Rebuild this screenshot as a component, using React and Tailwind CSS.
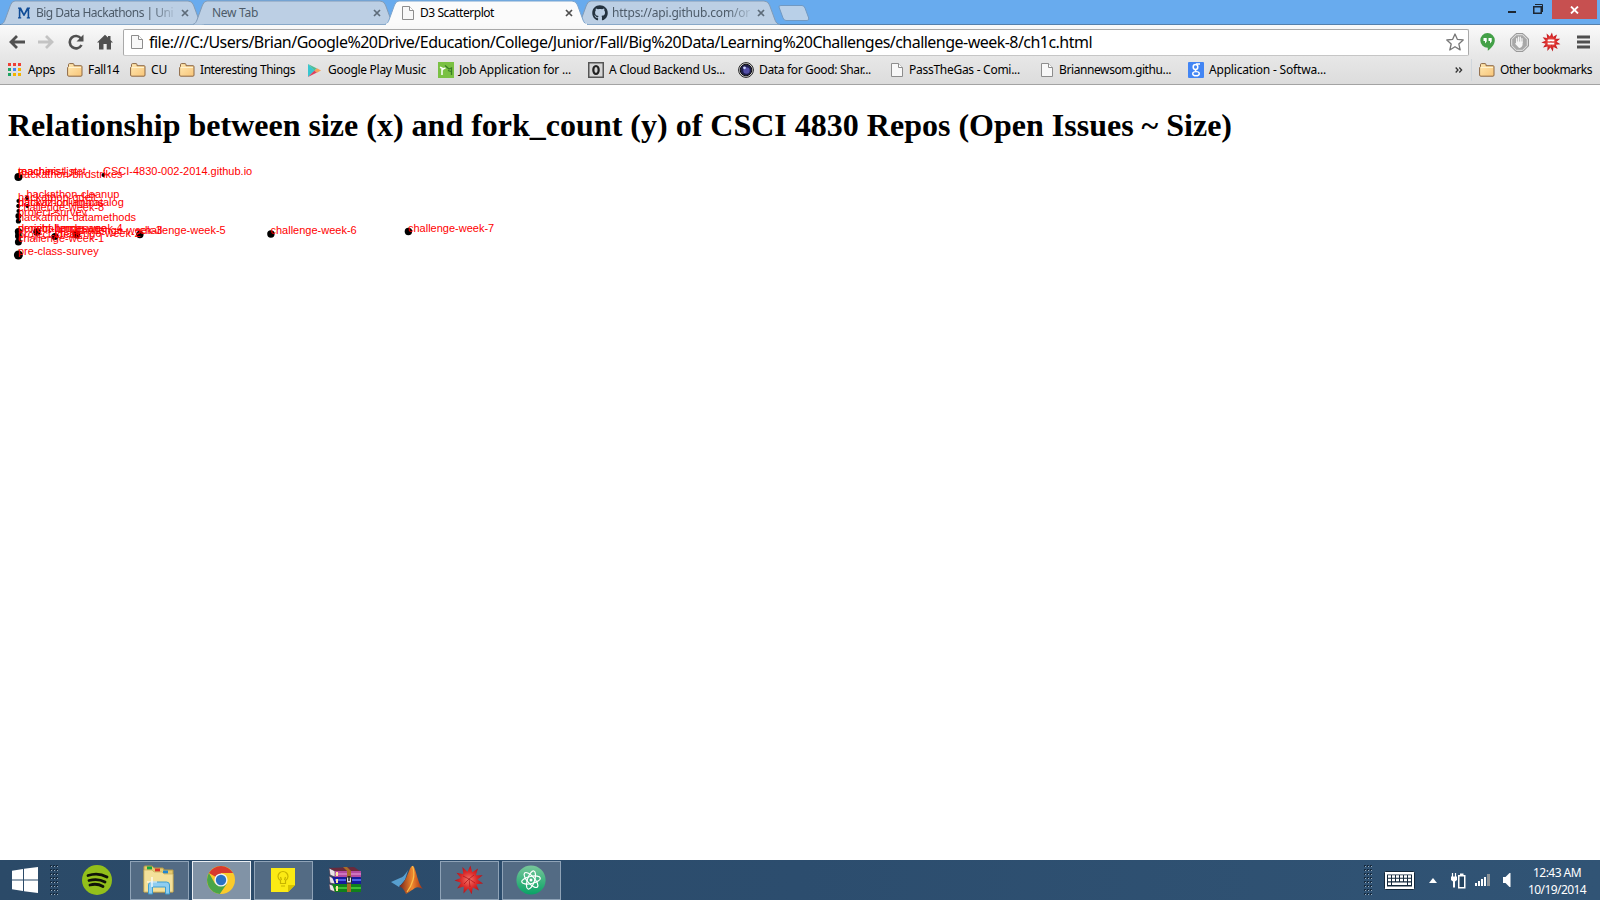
import React, { useLayoutEffect, useRef } from "react";
import { FaGithub } from "react-icons/fa";

/* Text that is spaced to a given width in pixels. */
function Fit({ w, className = "", children }) {
  const ref = useRef(null);
  useLayoutEffect(() => {
    const el = ref.current;
    el.style.letterSpacing = "0px";
    const natural = el.getBoundingClientRect().width;
    el.style.letterSpacing = (w - natural) / String(children).length + "px";
  }, [w, children]);
  return (
    <span ref={ref} className={"inline-block shrink-0 whitespace-pre " + className}>
      {children}
    </span>
  );
}

function PageIcon({ className = "" }) {
  return (
    <svg className={"shrink-0 " + className} width="12" height="14" viewBox="0 0 12 14">
      <path d="M.5.5h7l4 4v9H.5z" fill="#f8f8f8" stroke="#8d8d8d" />
      <path d="M7.5.5v4h4" fill="#fff" stroke="#8d8d8d" />
    </svg>
  );
}

function Folder() {
  return (
    <svg className="shrink-0" width="16" height="14" viewBox="0 0 16 14">
      <defs>
        <linearGradient id="fold" x1="0" y1="0" x2="1" y2="1">
          <stop offset="0" stopColor="#ffe9b4" />
          <stop offset="1" stopColor="#f8c578" />
        </linearGradient>
      </defs>
      <path d="M1.5 3.5V1.7Q1.5.6 2.5.6H6q1 0 1 1.1v1h7q1 0 1 1v8.300q0 1.200-1 1.200H1.800Q.6 13.200.6 12V4.500z" fill="url(#fold)" stroke="#8d6845" />
      <path d="M2 4.500h12" stroke="#fff3cf" />
    </svg>
  );
}

function Tab({ active, children }) {
  return (
    <div className={"relative flex h-[25px] w-48 shrink-0 items-center pl-[18px] " + (active ? "z-10" : "")}>
      <svg className="absolute top-0 left-0 overflow-visible" width="204" height="25" viewBox="0 0 204 25">
        <path
          d="M1 24.500C4 23 4 22 5 20L10.500 5Q12 1 15 1H188Q192 1 193.500 5L199 20C200 22.500 201 24 204 24.500"
          fill={active ? "#fbfbfb" : "#bccfe4"}
          stroke={active ? "#7ba4cd" : "#819bb7"}
        />
        {active && <path d="M2 24.500H203" stroke="#fafafa" strokeWidth="2" />}
      </svg>
      <div className="relative flex w-full items-center">{children}</div>
      <svg className="relative mr-[3.500px] shrink-0" width="8" height="8" viewBox="0 0 8 8">
        <path d="M1 1l6 6M7 1L1 7" stroke={active ? "#4f4f4f" : "#5d6b79"} strokeWidth="1.700" />
      </svg>
    </div>
  );
}

function Bookmark({ gap = "gap-[6px]", w, icon, label, className }) {
  return (
    <div className={"flex shrink-0 items-center " + gap + " " + className}>
      {icon}
      <Fit w={w}>{label}</Fit>
    </div>
  );
}

const appColors = ["#ee4035", "#ee4035", "#ee4035", "#1fa463", "#4386f5", "#f4b400", "#1fa463", "#f4b400", "#f4b400"];

const AppsIcon = () => (
  <svg width="14" height="14" viewBox="0 0 14 14">
    {appColors.map((c, i) => (
      <rect key={i} x={(i % 3) * 5} y={Math.floor(i / 3) * 5} width="3" height="3" fill={c} />
    ))}
  </svg>
);

const PlayIcon = () => (
  <svg width="15" height="15" viewBox="0 0 15 15">
    <path d="M1 1v13l7-6.500z" fill="#37c6d0" />
    <path d="M1 1l9 4.500-2.500 2z" fill="#53bd93" />
    <path d="M1 14l9-4.500-2.500-2z" fill="#e0405e" />
    <path d="M7.500 7.500L10 5.200l4 2.300-4 2.300z" fill="#f5a05a" />
  </svg>
);

const GreenIcon = () => (
  <svg width="16" height="16" viewBox="0 0 16 16">
    <rect width="16" height="16" fill="#7ac143" />
    <path d="M2 5.200l2 .8v7M4.500 8q.5-2 3-1.800" fill="none" stroke="#fff" strokeWidth="1.500" />
    <path d="M7 3.500l4 3.500 2.500-1V13M10 8.500l3 1" stroke="#397d26" strokeWidth="1.300" fill="none" />
  </svg>
);

const OIcon = () => (
  <svg width="16" height="16" viewBox="0 0 16 16">
    <rect x=".75" y=".75" width="14.500" height="14.500" fill="#d6d6d6" stroke="#555" strokeWidth="1.500" />
    <ellipse cx="8" cy="8" rx="2.700" ry="4" fill="none" stroke="#222" strokeWidth="2.200" />
  </svg>
);

const LensIcon = () => (
  <svg width="16" height="16" viewBox="0 0 16 16">
    <circle cx="8" cy="8" r="7.400" fill="#ddd" stroke="#222" />
    <circle cx="8" cy="8" r="5.800" fill="#20204e" stroke="#111" />
    <circle cx="8.500" cy="8.500" r="3.200" fill="#5450a8" />
    <circle cx="6.500" cy="5.800" r="1.400" fill="#cbd3ff" />
  </svg>
);

const GIcon = () => (
  <svg width="16" height="16" viewBox="0 0 16 16">
    <rect width="16" height="16" rx="1" fill="#4285f4" />
    <ellipse cx="7.500" cy="5" rx="2.300" ry="2.500" fill="none" stroke="#fff" strokeWidth="1.500" />
    <path d="M12 2H8M8 7.500q-1.500 1 .5 2" fill="none" stroke="#fff" strokeWidth="1.300" />
    <ellipse cx="8" cy="11.700" rx="3.300" ry="2.100" fill="none" stroke="#fff" strokeWidth="1.400" />
  </svg>
);

function Spikes({ size }) {
  const pts = [];
  for (let i = 0; i < 22; i++) {
    const r = i % 2 ? 8.4 : 14.5;
    const a = (i * Math.PI) / 11 - Math.PI / 2 + 0.1;
    pts.push((15 + r * Math.cos(a)).toFixed(1) + "," + (15 + r * Math.sin(a)).toFixed(1));
  }
  return (
    <svg width={size} height={size} viewBox="0 0 30 30">
      <defs>
        <radialGradient id="spk">
          <stop offset="0" stopColor="#f4766a" />
          <stop offset=".55" stopColor="#dc2c2b" />
          <stop offset="1" stopColor="#b51219" />
        </radialGradient>
      </defs>
      <polygon points={pts.join(" ")} fill="url(#spk)" />
      <path d="M9 11l6 3 5-4M15 14l1 8M10 19l5-5 6 4" fill="none" stroke="#b3171c" strokeWidth=".8" />
      {size < 25 && <path d="M10 12.500h10M10 17.500h10" stroke="#fff" strokeWidth="2.600" />}
    </svg>
  );
}

const points = [
  [18, 177, 4, "hackathon-birdstrikes", 178],
  [18, 177, 2, "machinist_net", 175],
  [18, 177, 2, "teachers-list", 175],
  [103, 175, 2, "CSCI-4830-002-2014.github.io", 175],
  [26.5, 198, 2, "hackathon-cleanup", 198],
  [18, 201, 2, "hackathon-gdelt", 201],
  [18, 206, 2, "hackathon-ag-catalog", 206],
  [18, 206, 2, "dataviz-columbus", 206],
  [27, 206, 2, "", 206],
  [18, 211, 2, "challenge-week-8", 211],
  [18, 216, 3, "project-survey", 216],
  [18, 221, 2.6, "hackathon-datamethods", 221],
  [18, 231.500, 3.600, "project-homepage", 232],
  [36.500, 232, 3.700, "challenge-week-4", 232],
  [18, 236, 3.400, "project-ideas", 238],
  [54.500, 236.500, 3.500, "challenge-week-2", 237],
  [76, 234.500, 3.900, "challenge-week-3", 234],
  [18, 232, 3, "demitri-lunch", 232],
  [139.500, 234.500, 3.700, "challenge-week-5", 234],
  [270.500, 234, 3.700, "challenge-week-6", 234],
  [408, 231.500, 3.700, "challenge-week-7", 232],
  [18, 242, 3.500, "challenge-week-1", 242],
  [18, 255, 4.500, "pre-class-survey", 255],
];

function TaskButton({ state = "open", children }) {
  const look = {
    plain: "border-transparent pr-[2px]",
    open: "border-[#8fa3b7] bg-[#536b84] pr-px",
    current: "border-[#e9eef3] bg-[#8193a6] pr-px",
  }[state];
  return (
    <div className={"flex h-[39px] w-[59px] shrink-0 items-center justify-center border " + look}>{children}</div>
  );
}

function Grip() {
  return (
    <svg width="9" height="31" viewBox="0 0 9 31">
      {Array.from({ length: 24 }, (_, i) => (
        <g key={i}>
          <rect x={(i % 3) * 3} y={Math.floor(i / 3) * 4} width="2" height="2" fill="#152a3f" />
          <rect x={(i % 3) * 3 + 1} y={Math.floor(i / 3) * 4 + 1} width="1" height="1" fill="#9dafbf" />
        </g>
      ))}
    </svg>
  );
}

function TabStrip() {
  return (
    <div className="flex h-[25px] shrink-0 border-b border-[#5480ac] bg-[#68abee] text-[12px] leading-4 text-[#4d5b69]">
      <div className="flex h-[25px] w-[772px]">
        <Tab>
          <svg className="mr-[6px] shrink-0" width="12" height="12" viewBox="0 0 12 12">
            <path d="M0 .5h3L6 6.500 9 .5h3v1.300h-.8v8.400h.8v1.300H8.800v-1.300h.8V3.500L6.400 9h-.8L2.400 3.500v6.700h.8v1.300H0v-1.300h.8V1.800H0z" fill="#0f4c97" />
          </svg>
          <div className="w-[140px] overflow-hidden [mask-image:linear-gradient(to_right,black_115px,transparent_142px)]">
            <Fit w={137}>Big Data Hackathons | Uni</Fit>
          </div>
        </Tab>
        <Tab>
          <Fit w={46} className="ml-[2px]">New Tab</Fit>
        </Tab>
        <Tab active>
          <PageIcon className="mr-[6px]" />
          <Fit w={74} className="text-black">D3 Scatterplot</Fit>
        </Tab>
        <Tab>
          <FaGithub className="-ml-[2px] mr-[4px] shrink-0 text-[#24323f]" size={16} />
          <div className="w-[140px] overflow-hidden [mask-image:linear-gradient(to_right,black_115px,transparent_142px)]">
            <Fit w={138}>https://api.github.com/or</Fit>
          </div>
        </Tab>
      </div>
      <svg className="ml-[6px] mt-[5px]" width="32" height="16" viewBox="0 0 32 16">
        <path d="M1 2Q.500.500 3 .500H24Q26 .500 27 3L30.700 13Q31.200 15.500 29 15.500H8Q6 15.500 5 13z" fill="#b9d0e8" stroke="#7199c2" />
      </svg>
      <div className="ml-auto flex h-5">
        <svg width="48" height="19" viewBox="0 0 48 19">
          <path d="M4 11h8v2H4z" fill="#1d2733" />
          <path d="M29.750 6.750h7.500v6.500h-7.500z" fill="none" stroke="#1d2733" strokeWidth="1.500" />
          <path d="M31 4.500h7.500V12" fill="none" stroke="#1d2733" />
        </svg>
        <div className="mr-[3px] flex h-[19px] w-[45px] items-center justify-center bg-[#c75050]">
          <svg width="9" height="8" viewBox="0 0 9 8">
            <path d="M1 .5l7 7M8 .5l-7 7" stroke="#fff" strokeWidth="1.800" />
          </svg>
        </div>
      </div>
    </div>
  );
}

function Toolbar() {
  return (
    <div className="flex h-[31px] items-center pt-[3px]">
      <div className="flex w-[123px] items-center gap-[13px] pl-[9px]">
        <svg width="16" height="16" viewBox="0 0 16 16">
          <path d="M8 2L2 8l6 6M2.500 8H16" fill="none" stroke="#505050" strokeWidth="2.800" />
        </svg>
        <svg width="16" height="16" viewBox="0 0 16 16">
          <path d="M8 2l6 6-6 6M13.500 8H0" fill="none" stroke="#c3c3c3" strokeWidth="2.800" />
        </svg>
        <svg className="ml-px" width="16" height="16" viewBox="0 0 16 16">
          <path d="M13 4.500A6.200 6.200 0 1 0 13.500 11" fill="none" stroke="#505050" strokeWidth="2.600" />
          <path d="M15.500.5v7h-7z" fill="#505050" />
        </svg>
        <svg width="16" height="16" viewBox="0 0 16 16">
          <path d="M8 .8l3 2.800V2h2.500v4L16 8.500h-2V15.500H9.700V10H6.500v5.500H2V8.500H0z" fill="#505050" />
        </svg>
      </div>
      <div className="flex h-[27px] w-[1346px] items-center rounded-[2px] border border-[#a9a9a9] border-b-[#c6c6c6] bg-white pl-[7px] pr-[4px]">
        <PageIcon />
        <Fit w={943} className="ml-[6px] text-[16px] leading-6 text-black">
          file:///C:/Users/Brian/Google%20Drive/Education/College/Junior/Fall/Big%20Data/Learning%20Challenges/challenge-week-8/ch1c.html
        </Fit>
        <svg className="ml-auto" width="18" height="18" viewBox="0 0 18 18">
          <path d="M9 1l2.300 5.300 5.900.6-4.400 4 1.400 6L9 13.700 3.800 17l1.400-6-4.400-4 5.900-.7z" fill="#fff" stroke="#777" strokeWidth="1.300" strokeLinejoin="round" />
        </svg>
      </div>
      <svg className="ml-[11px]" width="15" height="18" viewBox="0 0 15 18">
        <path d="M7.500 0a7.300 7.300 0 0 1 7.300 7.300c0 4.200-3.300 7.800-7 10.400v-3A7.300 7.300 0 1 1 7.500 0z" fill="#43a047" />
        <path d="M3.500 5h3.200v3.500L5 10.500V8H3.500zM8.500 5h3.200v3.500L10 10.500V8H8.500z" fill="#fff" />
      </svg>
      <svg className="ml-[15px]" width="19" height="19" viewBox="0 0 19 19">
        <path d="M6 .5h7L18.500 6v7L13 18.500H6L.5 13V6z" fill="#aaa" stroke="#999" />
        <path d="M6.500 1.700h6l4.800 4.800v6l-4.800 4.800h-6l-4.800-4.800v-6z" fill="#a8a8a8" stroke="#e6e6e6" />
        <path d="M6.700 9.500V5.500M8.500 8.500V4.200M10.300 8.500V4.200M12 9.500V5.500" stroke="#f5f5f5" strokeWidth="1.200" strokeLinecap="round" />
        <path d="M6.100 8.500h6.500V12q-1 3-3.500 3L4.800 10.500l1.300-.3z" fill="#f5f5f5" />
      </svg>
      <div className="ml-[12px]">
        <Spikes size={20} />
      </div>
      <svg className="ml-[16px]" width="13" height="14" viewBox="0 0 13 14">
        <path d="M0 2h13M0 7h13M0 12h13" stroke="#4f4f4f" strokeWidth="3" />
      </svg>
    </div>
  );
}

function Bookmarks() {
  return (
    <div className="flex h-[28px] items-center pl-2 text-[12px] leading-4 text-black">
      <Bookmark className="w-[59px]" w={27} icon={<AppsIcon />} label="Apps" />
      <Bookmark className="w-[63px]" gap="gap-[5px]" w={31} icon={<Folder />} label="Fall14" />
      <Bookmark className="w-[49px]" gap="gap-[5px]" w={16} icon={<Folder />} label="CU" />
      <Bookmark className="w-[128px]" gap="gap-[5px]" w={95} icon={<Folder />} label="Interesting Things" />
      <Bookmark className="w-[131px]" w={98} icon={<PlayIcon />} label="Google Play Music" />
      <Bookmark className="w-[150px]" gap="gap-[5px]" w={112} icon={<GreenIcon />} label="Job Application for ..." />
      <Bookmark className="w-[150px]" gap="gap-[5px]" w={116} icon={<OIcon />} label="A Cloud Backend Us..." />
      <Bookmark className="w-[153px]" gap="gap-[5px]" w={112} icon={<LensIcon />} label="Data for Good: Shar..." />
      <Bookmark className="w-[150px]" w={111} icon={<PageIcon />} label="PassTheGas - Comi..." />
      <Bookmark className="w-[147px]" w={112} icon={<PageIcon />} label="Briannewsom.githu..." />
      <Bookmark gap="gap-[5px]" w={117} className="" icon={<GIcon />} label="Application - Softwa..." />
      <div className="ml-auto flex w-[145px] items-center">
        <svg width="8" height="6" viewBox="0 0 8 6">
          <path d="M.7.5L3 3 .7 5.500M4.300.5L6.600 3 4.300 5.500" fill="none" stroke="#333" strokeWidth="1.300" />
        </svg>
        <div className="ml-2 mr-[7px] h-[22px] w-px bg-[#d0d6dc]" />
        <Bookmark className="" gap="gap-[5px]" w={92} icon={<Folder />} label="Other bookmarks" />
      </div>
    </div>
  );
}

function Taskbar() {
  return (
    <footer className="flex h-10 shrink-0 items-center bg-linear-to-r from-[#2b4a68] via-[#2c4d6e] to-[#315475] text-white">
      <svg className="ml-3" width="26" height="26" viewBox="0 0 26 26">
        <path d="M0 3.700L11 2v10.400H0zM12 1.800L26 0v12.400H12zM0 13.500h11V24L0 22.300zM12 13.500h14V26l-14-1.800z" fill="#fff" />
      </svg>
      <div className="ml-3">
        <Grip />
      </div>
      <div className="ml-[9px] flex gap-[3px]">
        <TaskButton state="plain">
          <svg width="30" height="30" viewBox="0 0 30 30">
            <circle cx="15" cy="15" r="15" fill="#93c01b" />
            <path d="M6 10.500q10-3.500 19 1.500M7 15.500q9-2.500 16 1.500M8 20q7-2 13 1.500" fill="none" stroke="#101408" strokeWidth="2.800" strokeLinecap="round" />
          </svg>
        </TaskButton>
        <TaskButton>
          <svg width="32" height="30" viewBox="0 0 32 30">
            <path d="M1 27V2q0-1 1-1h7l2 2h9l1 2h9v22z" fill="#e5c96f" stroke="#b69b45" />
            <path d="M4 1.500h5v3H4z" fill="#16a53c" />
            <path d="M12 3.500h5v3h-5z" fill="#d63527" />
            <path d="M20 5.500h5v3h-5z" fill="#2186cf" />
            <path d="M1 27V5h8l2 2h8l2 2h9v18z" fill="#f4e09a" stroke="#c7ad5a" strokeWidth=".7" />
            <path d="M5.500 29V20q0-3 3-3h15q3 0 3 3v9h-4v-7h-13v7z" fill="#8fcdf0" stroke="#3f9ed0" />
            <path d="M9 12v10M4 17h10" stroke="#fff" strokeWidth="1.200" />
          </svg>
        </TaskButton>
        <TaskButton state="current">
          <svg width="30" height="30" viewBox="0 0 30 30">
            <circle cx="15" cy="15" r="14" fill="#fbcb2a" />
            <path d="M15 15L2.900 8A14 14 0 0 1 27.100 8H15z" fill="#d83a2e" />
            <path d="M2.900 8A14 14 0 0 0 13.800 28.950L21 18.500 9 18.500z" fill="#4aa548" />
            <circle cx="15" cy="15" r="6.600" fill="#f2f2f2" />
            <circle cx="15" cy="15" r="5.200" fill="#2b72c4" />
          </svg>
        </TaskButton>
        <TaskButton>
          <svg width="24" height="24" viewBox="0 0 24 24">
            <path d="M0 0h24v17l-7 7H0z" fill="#fbea14" />
            <path d="M17 24v-7h7z" fill="#d8c400" />
            <path d="M9.500 15.500v-3Q7 11 7 8.500a5 5 0 0 1 10 0q0 2.500-2.500 4v3zM10 18h4M10.500 12l-1-3M13.500 12l1-3" fill="none" stroke="#c8b400" strokeWidth="1.200" />
          </svg>
        </TaskButton>
        <TaskButton state="plain">
          <svg width="32" height="26" viewBox="0 0 32 26">
            <path d="M0 1l6 3v6l-5-2zM0 9l6 3v5l-5-1zM0 17l6 2v6l-5-2z" fill="#e9e4e7" stroke="#3d283d" strokeWidth=".6" />
            <path d="M0 1L25 0l6 4H6z" fill="#6a2a3c" />
            <path d="M6 4h26v6H6z" fill="#b44aa0" />
            <path d="M6 7h26" stroke="#e7a0dc" />
            <path d="M3 10h28l1 1v6H6z" fill="#161a9c" />
            <path d="M6 13h26" stroke="#5f77ff" strokeWidth="1.500" />
            <path d="M3 17h28l1 1v7H6z" fill="#12801b" />
            <path d="M6 21h26" stroke="#4cd53f" strokeWidth="1.500" />
            <path d="M14 0h4l4 4v21h-4V4z" fill="#a86d28" />
            <rect x="17.500" y="10" width="5" height="6" rx="1" fill="#ddd" stroke="#222" />
            <path d="M20 9v5" stroke="#222" strokeWidth="1.500" />
            <path d="M8 5v4M8 12v4M8 19v5" stroke="#ffe7a0" strokeWidth="2" />
          </svg>
        </TaskButton>
        <TaskButton state="plain">
          <svg width="32" height="30" viewBox="0 0 32 30">
            <defs>
              <linearGradient id="peak">
                <stop offset="0" stopColor="#752019" />
                <stop offset=".55" stopColor="#f0882e" />
                <stop offset="1" stopColor="#a32d13" />
              </linearGradient>
            </defs>
            <path d="M0 17l9-4q4-1 8-8l-3 10-6 7z" fill="#589fcf" />
            <path d="M9 21l5-6q3-3 4-9l-2 17z" fill="#254763" />
            <path d="M8 21q3-1 6-6C18 8 19 1 21.500 1 25 1 26 18 32 24q-5-3-8-1t-9 6q-3-7-7-8z" fill="url(#peak)" />
            <path d="M21.500 1q2.500 7 .5 14t-6 12" fill="none" stroke="#f9c04d" strokeWidth="1.200" />
          </svg>
        </TaskButton>
        <TaskButton>
          <Spikes size={30} />
        </TaskButton>
        <TaskButton>
          <svg width="30" height="30" viewBox="0 0 30 30">
            <defs>
              <linearGradient id="atom" x1="0" y1="0" x2="0" y2="1">
                <stop offset="0" stopColor="#79c79b" />
                <stop offset="1" stopColor="#08a365" />
              </linearGradient>
            </defs>
            <circle cx="15" cy="15" r="14.600" fill="url(#atom)" />
            <g fill="none" stroke="#fff" strokeWidth="1.200">
              <ellipse cx="15" cy="15" rx="9.500" ry="3.600" transform="rotate(-12 15 15)" />
              <ellipse cx="15" cy="15" rx="9.500" ry="3.600" transform="rotate(48 15 15)" />
              <ellipse cx="15" cy="15" rx="9.500" ry="3.600" transform="rotate(108 15 15)" />
            </g>
            <circle cx="15" cy="15" r="1.500" fill="#fff" />
          </svg>
        </TaskButton>
      </div>
      <div className="ml-auto flex items-center">
        <Grip />
        <svg className="ml-[11px]" width="31" height="19" viewBox="0 0 31 19">
          <rect x=".5" y=".5" width="30" height="18" rx="1" fill="#fff" stroke="#13273a" />
          <path d="M3 3.500h25v12H3z" fill="#13273a" />
          <path d="M4 5.500h23M4 9h23" stroke="#fff" strokeWidth="2.600" strokeDasharray="3 1" />
          <path d="M4 12.800h3M8 12.800h15M24 12.800h3" stroke="#fff" strokeWidth="2.600" />
        </svg>
        <svg className="ml-[14px]" width="8" height="5" viewBox="0 0 8 5">
          <path d="M0 5l4-5 4 5z" fill="#fff" />
        </svg>
        <svg className="ml-[14px]" width="15" height="17" viewBox="0 0 15 17">
          <path d="M1.500 1v4M4.500 1v4" stroke="#fff" strokeWidth="1.200" />
          <path d="M0 4.500h6V8L4 9.500v6H2v-6L0 8z" fill="#fff" />
          <path d="M7.750 3.750h6v12h-6z" fill="#24435f" stroke="#fff" strokeWidth="1.500" />
          <path d="M9 1.500h3.500V3H9z" fill="#fff" />
        </svg>
        <svg className="ml-[9px]" width="15" height="12" viewBox="0 0 15 12">
          <path d="M0 9h2v3H0zM3 7h2v5H3zM6 5h2v7H6zM9 3h2v9H9z" fill="#fff" />
          <path d="M12 0h3v12h-3z" fill="#8b9297" />
        </svg>
        <svg className="ml-[13px]" width="8" height="14" viewBox="0 0 8 14">
          <path d="M0 4h2.500L6.500 0h1v14h-1l-4-4H0z" fill="#fff" />
        </svg>
        <div className="ml-[15px] mr-[12px] flex w-[62px] flex-col items-center pt-px text-[12px] leading-[17px]">
          <Fit w={48}>12:43 AM</Fit>
          <Fit w={58}>10/19/2014</Fit>
        </div>
      </div>
    </footer>
  );
}

export default function App() {
  return (
    <div className="flex h-[900px] w-[1600px] flex-col overflow-hidden bg-white font-['Noto_Sans',sans-serif]">
      <TabStrip />
      <header className="h-[60px] shrink-0 border-b border-[#a3a3a3] bg-linear-to-b from-[#fafafa] via-[#e8e8e8] to-[#dcdcdc]">
        <Toolbar />
        <Bookmarks />
      </header>
      <main className="min-h-0 flex-1 pl-2 pt-[22px]">
        <h1 className="h-[37px] font-['Liberation_Serif',serif] text-[32px] leading-[37px] font-bold text-black">
          <Fit w={1224}>Relationship between size (x) and fork_count (y) of CSCI 4830 Repos (Open Issues ~ Size)</Fit>
        </h1>
        <svg className="mt-[16px] -ml-2" width="600" height="110" viewBox="0 160 600 110">
          {points.map(([x, y, r], i) => (
            <circle key={i} cx={x + 0.4} cy={y} r={r} />
          ))}
          {points.map(([x, , , name, base], i) => (
            <text key={i} x={x} y={base} className="fill-[#ff0000] font-['Liberation_Sans',sans-serif] text-[11px]">
              {name}
            </text>
          ))}
        </svg>
      </main>
      <Taskbar />
    </div>
  );
}
